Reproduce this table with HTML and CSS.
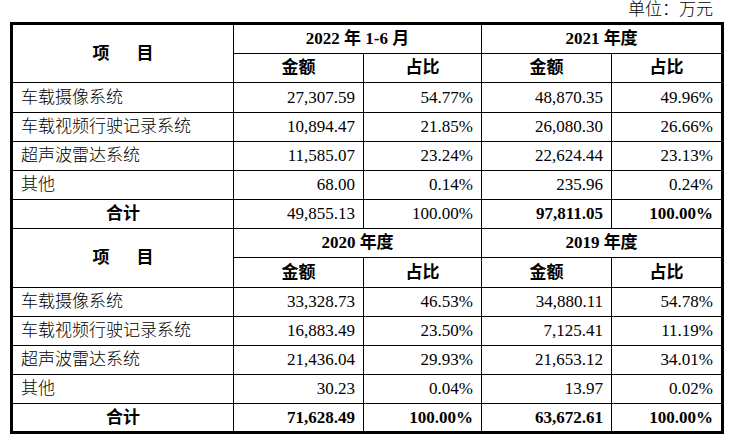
FILE: index.html
```html
<!DOCTYPE html>
<html lang="zh-CN">
<head>
<meta charset="utf-8">
<title>收入构成</title>
<link rel="stylesheet" href="styles.css">
</head>
<body>
<div class="page">
  <div class="unit">单位：万元</div>
  <div class="grid">
    <div class="c item r2">项<span class="sp"></span>目</div>
    <div class="c head span2">2022 年 1-6 月</div>
    <div class="c head span2">2021 年度</div>
    <div class="c head">金额</div>
    <div class="c head">占比</div>
    <div class="c head">金额</div>
    <div class="c head">占比</div>

    <div class="c name">车载摄像系统</div>
    <div class="c num">27,307.59</div>
    <div class="c num">54.77%</div>
    <div class="c num">48,870.35</div>
    <div class="c num">49.96%</div>

    <div class="c name">车载视频行驶记录系统</div>
    <div class="c num">10,894.47</div>
    <div class="c num">21.85%</div>
    <div class="c num">26,080.30</div>
    <div class="c num">26.66%</div>

    <div class="c name">超声波雷达系统</div>
    <div class="c num">11,585.07</div>
    <div class="c num">23.24%</div>
    <div class="c num">22,624.44</div>
    <div class="c num">23.13%</div>

    <div class="c name">其他</div>
    <div class="c num">68.00</div>
    <div class="c num">0.14%</div>
    <div class="c num">235.96</div>
    <div class="c num">0.24%</div>

    <div class="c total">合计</div>
    <div class="c num">49,855.13</div>
    <div class="c num">100.00%</div>
    <div class="c num bold">97,811.05</div>
    <div class="c num bold">100.00%</div>

    <div class="c item r2">项<span class="sp"></span>目</div>
    <div class="c head span2">2020 年度</div>
    <div class="c head span2">2019 年度</div>
    <div class="c head">金额</div>
    <div class="c head">占比</div>
    <div class="c head">金额</div>
    <div class="c head">占比</div>

    <div class="c name">车载摄像系统</div>
    <div class="c num">33,328.73</div>
    <div class="c num">46.53%</div>
    <div class="c num">34,880.11</div>
    <div class="c num">54.78%</div>

    <div class="c name">车载视频行驶记录系统</div>
    <div class="c num">16,883.49</div>
    <div class="c num">23.50%</div>
    <div class="c num">7,125.41</div>
    <div class="c num">11.19%</div>

    <div class="c name">超声波雷达系统</div>
    <div class="c num">21,436.04</div>
    <div class="c num">29.93%</div>
    <div class="c num">21,653.12</div>
    <div class="c num">34.01%</div>

    <div class="c name">其他</div>
    <div class="c num">30.23</div>
    <div class="c num">0.04%</div>
    <div class="c num">13.97</div>
    <div class="c num">0.02%</div>

    <div class="c total">合计</div>
    <div class="c num bold">71,628.49</div>
    <div class="c num bold">100.00%</div>
    <div class="c num bold">63,672.61</div>
    <div class="c num bold">100.00%</div>
  </div>
</div>
</body>
</html>
```
FILE: styles.css
```css
html, body {
  margin: 0;
  padding: 0;
  background: #fff;
}
body {
  font-family: "Liberation Serif", "Noto Sans CJK SC", serif;
  font-size: 17px;
  color: #000;
}
.page {
  width: 714px;
  padding-left: 10px;
}
.unit {
  height: 22px;
  line-height: 20px;
  text-align: right;
  padding-right: 11px;
  box-sizing: border-box;
  font-weight: 300;
}
.grid {
  display: grid;
  grid-template-columns: 220px 129px 117px 129px 109px;
  grid-template-rows: 28px 28px 29px 28px 28px 28px 28px 28px 29px 28px 28px 28px 28px 27px;
  gap: 1px;
  padding: 3px;
  background: #000;
}
.c {
  background: #fff;
  display: flex;
  align-items: center;
  padding: 0 8px;
  white-space: nowrap;
  line-height: 20px;
}
.name {
  font-weight: 300;
}
.item, .head, .total {
  justify-content: center;
  font-weight: bold;
}
.r2 {
  grid-row: span 2;
}
.span2 {
  grid-column: span 2;
}
.sp {
  display: inline-block;
  width: 27px;
}
.num {
  justify-content: flex-end;
}
.bold {
  font-weight: bold;
}
```
